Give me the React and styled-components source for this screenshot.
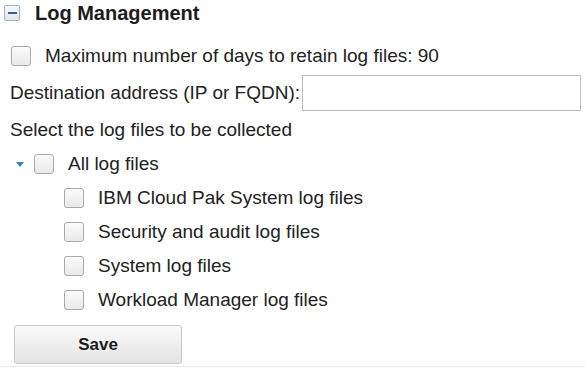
import React, { useState } from 'react';
import styled, { createGlobalStyle } from 'styled-components';

const GlobalStyle = createGlobalStyle`
  body {
    margin: 0;
    background: #ffffff;
    font-family: 'Liberation Sans', Arial, sans-serif;
    color: #222222;
  }
`;

const Panel = styled.section`
  width: 585px;
  height: 369px;
  overflow: hidden;
  box-sizing: border-box;
`;

const Header = styled.div`
  display: flex;
  align-items: center;
  gap: 15px;
  height: 26px;
  padding-left: 4px;
`;

const ToggleIcon = styled.span`
  display: flex;
  align-items: center;
  justify-content: center;
  width: 14px;
  height: 14px;
  border: 1px solid #9fb3c6;
  border-radius: 2px;
  background: linear-gradient(#f4f8fb, #dfe8f0);
  &::after {
    content: '';
    width: 9px;
    height: 2px;
    background: #3d5f80;
  }
`;

const Title = styled.h2`
  margin: 0;
  font-size: 20px;
  font-weight: 700;
  color: #1c1c1c;
`;

const Body = styled.div`
  display: flex;
  flex-direction: column;
  padding: 13px 0 0 10px;
  border-bottom: 1px solid #ececec;
  height: 341px;
  box-sizing: border-box;
`;

const Row = styled.div`
  display: flex;
  align-items: center;
  height: ${(p) => p.h || 34}px;
  padding-left: ${(p) => p.indent || 0}px;
  font-size: 19px;
`;

const Box = styled.span`
  flex: none;
  width: 18px;
  height: 18px;
  border: 1px solid #a9a9a9;
  border-radius: 3px;
  background: linear-gradient(#fbfbfb, #e9e9e9);
  margin-right: 14px;
  cursor: pointer;
`;

const Caret = styled.span`
  flex: none;
  width: 0;
  height: 0;
  border-left: 4.5px solid transparent;
  border-right: 4.5px solid transparent;
  border-top: 5px solid #2a87c4;
  margin: 0 10px 0 6px;
`;

const Label = styled.label`
  white-space: nowrap;
`;

const AddressInput = styled.input`
  width: 279px;
  height: 36px;
  box-sizing: border-box;
  border: 1px solid #bdbdbd;
  margin-left: 2px;
  font-family: inherit;
  font-size: 16px;
  outline: none;
`;

const SaveButton = styled.button`
  width: 168px;
  height: 39px;
  margin: 8px 0 0 4px;
  border: 1px solid #c8c8c8;
  border-radius: 3px;
  background: linear-gradient(#fafafa, #e4e4e4);
  font-family: inherit;
  font-size: 17px;
  font-weight: 700;
  color: #1c1c1c;
  cursor: pointer;
`;

const logFiles = [
  'IBM Cloud Pak System log files',
  'Security and audit log files',
  'System log files',
  'Workload Manager log files',
];

function App() {
  const [address, setAddress] = useState('');

  return (
    <Panel>
      <GlobalStyle />
      <Header>
        <ToggleIcon />
        <Title>Log Management</Title>
      </Header>
      <Body>
        <Row indent={1}>
          <Box />
          <Label>Maximum number of days to retain log files: 90</Label>
        </Row>
        <Row h={40}>
          <Label>Destination address (IP or FQDN):</Label>
          <AddressInput value={address} onChange={(e) => setAddress(e.target.value)} />
        </Row>
        <Row>
          <Label>Select the log files to be collected</Label>
        </Row>
        <Row>
          <Caret />
          <Box />
          <Label>All log files</Label>
        </Row>
        {logFiles.map((name) => (
          <Row key={name} indent={54}>
            <Box />
            <Label>{name}</Label>
          </Row>
        ))}
        <SaveButton type='button'>Save</SaveButton>
      </Body>
    </Panel>
  );
}

export default App;
